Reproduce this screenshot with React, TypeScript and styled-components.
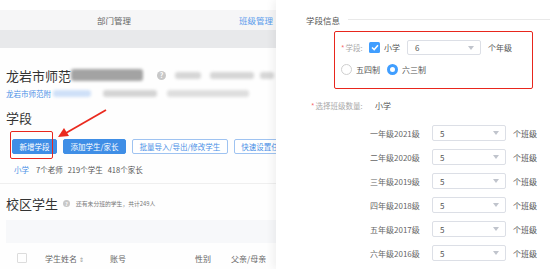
import styled, { createGlobalStyle } from 'styled-components';

const GlobalStyle = createGlobalStyle`
  html, body { margin: 0; padding: 0; background: #fff; }
  body { font-family: "Noto Sans CJK SC", "Noto Sans", sans-serif; color: #333; }
`;

const grades = [
  '一年级2021级',
  '二年级2020级',
  '三年级2019级',
  '四年级2018级',
  '五年级2017级',
  '六年级2016级',
];

const Blur = ({ w, h = 10, color = '#bdbdbd', ml = 0 }: { w: number; h?: number; color?: string; ml?: number }) => (
  <S.Blur style={{ width: w, height: h, background: color, marginLeft: ml }} />
);

const Caret = () => (
  <svg width="6" height="4" viewBox="0 0 6 4">
    <path d="M0 0 L6 0 L3 4 Z" fill="#c0c4cc" />
  </svg>
);

const Select = ({ value, wide }: { value: string; wide?: boolean }) => (
  <S.Select $wide={wide}>
    <span>{value}</span>
    <Caret />
  </S.Select>
);

export default function App() {
  return (
    <>
      <GlobalStyle />
      <S.Screen>
        <S.Left>
          <S.TopStrip />
          <S.Tabs>
            <S.Tab>部门管理</S.Tab>
            <S.Tab $active>班级管理</S.Tab>
          </S.Tabs>
          <S.GrayBand />
          <S.Content>
            <S.TitleRow>
              <S.Title>龙岩市师范</S.Title>
              <Blur w={72} h={12} color="#a3a3a3" />
              <S.Help $size={9} style={{ marginLeft: 14 }}>?</S.Help>
              <Blur w={26} h={7} color="#d6d6d6" ml={9} />
              <Blur w={44} h={7} color="#d6d6d6" ml={9} />
              <Blur w={14} h={7} color="#d6d6d6" ml={6} />
            </S.TitleRow>
            <S.LinkRow>
              <S.Link>龙岩市师范附</S.Link>
              <Blur w={38} h={7} color="#cfe0f8" ml={2} />
              <Blur w={54} h={7} color="#d4d4d4" ml={12} />
              <Blur w={82} h={7} color="#dedede" ml={10} />
            </S.LinkRow>
            <S.Section>学段</S.Section>
            <S.Buttons>
              <S.Button $primary>新增学段</S.Button>
              <S.Button $primary>添加学生/家长</S.Button>
              <S.Button>批量导入/导出/修改学生</S.Button>
              <S.Button>快速设置任课老师</S.Button>
            </S.Buttons>
            <S.Stats>
              <S.StatLink>小学</S.StatLink>
              <span>7个老师</span>
              <span>219个学生</span>
              <span>418个家长</span>
            </S.Stats>
          </S.Content>
          <S.Divider />
          <S.Content>
            <S.StudentsRow>
              <S.Title>校区学生</S.Title>
              <S.Help $size={7}>?</S.Help>
              <S.Hint>还有未分班的学生，共计249人</S.Hint>
            </S.StudentsRow>
            <S.FilterBar />
            <S.TableHead>
              <S.Check />
              <S.Col $w={65}>学生姓名 <S.Sort>⇕</S.Sort></S.Col>
              <S.Col $w={85}>账号</S.Col>
              <S.Col $w={36}>性别</S.Col>
              <S.Col $w={50}>父亲/母亲</S.Col>
            </S.TableHead>
          </S.Content>
        </S.Left>

        <S.Drawer>
          <S.Legend>
            <span>学段信息</span>
            <S.LegendLine />
          </S.Legend>
          <S.StageBox>
            <S.FormRow>
              <S.Label><S.Star>*</S.Star>学段:</S.Label>
              <S.Checkbox>
                <svg width="8" height="7" viewBox="0 0 8 7">
                  <path d="M1 3.5 L3.2 5.6 L7 1.2" fill="none" stroke="#fff" strokeWidth="1.5" />
                </svg>
              </S.Checkbox>
              <S.Text>小学</S.Text>
              <Select value="6" />
              <S.Text>个年级</S.Text>
            </S.FormRow>
            <S.FormRow>
              <S.Radio />
              <S.Text>五四制</S.Text>
              <S.Radio $checked />
              <S.Text>六三制</S.Text>
            </S.FormRow>
          </S.StageBox>
          <S.CountRow>
            <S.CountLabel><S.Star>*</S.Star>选择班级数量:</S.CountLabel>
            <S.Text>小学</S.Text>
          </S.CountRow>
          <S.Grades>
            {grades.map((g) => (
              <S.GradeRow key={g}>
                <S.GradeName>{g}</S.GradeName>
                <Select value="5" wide />
                <S.Text>个班级</S.Text>
              </S.GradeRow>
            ))}
          </S.Grades>
        </S.Drawer>

        <S.RedBox />
        <S.Arrow width="60" height="40" viewBox="0 0 60 40">
          <line x1="54" y1="4" x2="14" y2="27" stroke="#ea2a1f" strokeWidth="1.8" />
          <path d="M6 31 L12 22 L17 30 Z" fill="#ea2a1f" />
        </S.Arrow>
      </S.Screen>
    </>
  );
}

const S = {
  Screen: styled.div`
    position: relative;
    display: flex;
    width: 554px;
    height: 269px;
    overflow: hidden;
    background: #fff;
  `,
  Left: styled.div`
    width: 276px;
    flex-shrink: 0;
    overflow: hidden;
    background: #fefefe;
  `,
  TopStrip: styled.div`
    height: 10px;
    background: #fff;
  `,
  Tabs: styled.div`
    display: flex;
    height: 20px;
    align-items: center;
    background: #f6f6f7;
    padding-left: 97px;
    gap: 108px;
  `,
  Tab: styled.span<{ $active?: boolean }>`
    font-size: 8.5px;
    color: ${(p) => (p.$active ? '#5a9cec' : '#666')};
    white-space: nowrap;
  `,
  GrayBand: styled.div`
    height: 18px;
    background: #e8e9eb;
  `,
  Content: styled.div`
    padding-left: 6px;
  `,
  TitleRow: styled.div`
    display: flex;
    align-items: center;
    height: 20px;
    margin-top: 17px;
    white-space: nowrap;
  `,
  Title: styled.span`
    font-size: 13px;
    color: #333;
    line-height: 1;
  `,
  Blur: styled.span`
    display: inline-block;
    flex-shrink: 0;
    border-radius: 3px;
    filter: blur(1.6px);
  `,
  Help: styled.span<{ $size: number }>`
    display: inline-flex;
    align-items: center;
    justify-content: center;
    flex-shrink: 0;
    width: ${(p) => p.$size}px;
    height: ${(p) => p.$size}px;
    border-radius: 50%;
    background: #c8c8c8;
    color: #fff;
    font-size: ${(p) => p.$size - 2}px;
    font-weight: bold;
    line-height: 1;
  `,
  LinkRow: styled.div`
    display: flex;
    align-items: center;
    height: 12px;
    margin-top: 2px;
    white-space: nowrap;
  `,
  Link: styled.span`
    font-size: 7.5px;
    color: #4a8fe6;
  `,
  Section: styled.div`
    font-size: 13px;
    line-height: 16px;
    margin-top: 11px;
    color: #333;
  `,
  Buttons: styled.div`
    display: flex;
    gap: 6px;
    margin-top: 13px;
    padding-left: 6px;
    white-space: nowrap;
  `,
  Button: styled.div<{ $primary?: boolean }>`
    flex-shrink: 0;
    height: 15px;
    line-height: 14px;
    padding: 0 6.5px;
    box-sizing: border-box;
    font-size: 7.5px;
    border-radius: 2px;
    border: 1px solid ${(p) => (p.$primary ? '#3f8ee6' : '#9fc3f1')};
    background: ${(p) => (p.$primary ? '#3f8ee6' : '#fff')};
    color: ${(p) => (p.$primary ? '#fff' : '#4a8fe6')};
  `,
  Stats: styled.div`
    display: flex;
    gap: 5px;
    margin-top: 11px;
    padding-left: 8px;
    font-size: 7.5px;
    line-height: 10px;
    color: #555;
    white-space: nowrap;
  `,
  StatLink: styled.span`
    color: #4a8fe6;
    margin-right: 2px;
  `,
  Divider: styled.div`
    height: 1px;
    background: #efefef;
    margin-top: 8px;
  `,
  StudentsRow: styled.div`
    display: flex;
    align-items: center;
    gap: 5px;
    height: 16px;
    margin-top: 11px;
    white-space: nowrap;
  `,
  Hint: styled.span`
    font-size: 5.8px;
    color: #777;
    margin-left: 1px;
  `,
  FilterBar: styled.div`
    height: 23px;
    margin-top: 9px;
    background: #f7f8fa;
  `,
  TableHead: styled.div`
    display: flex;
    align-items: center;
    height: 12px;
    margin-top: 9px;
    padding-left: 11px;
    font-size: 8px;
    color: #666;
    white-space: nowrap;
  `,
  Check: styled.span`
    width: 10px;
    height: 10px;
    border: 1px solid #dcdcdc;
    box-sizing: border-box;
    border-radius: 1px;
    margin-right: 18px;
    flex-shrink: 0;
  `,
  Col: styled.span<{ $w: number }>`
    width: ${(p) => p.$w}px;
    flex-shrink: 0;
  `,
  Sort: styled.span`
    font-size: 6px;
    color: #999;
  `,
  Drawer: styled.div`
    flex: 1;
    background: #fff;
    box-shadow: -3px 0 8px rgba(0, 0, 0, 0.06);
    padding: 13px 4px 0 30px;
    font-size: 8px;
    color: #555;
    z-index: 1;
  `,
  Legend: styled.div`
    display: flex;
    align-items: center;
    gap: 8px;
    font-size: 8.5px;
    color: #555;
    height: 13px;
  `,
  LegendLine: styled.div`
    flex: 1;
    height: 1px;
    background: #e9e9e9;
  `,
  StageBox: styled.div`
    width: 199px;
    height: 58px;
    box-sizing: border-box;
    margin: 4px 0 0 27px;
    padding: 10px 0 0 8px;
    display: flex;
    flex-direction: column;
    gap: 7px;
  `,
  FormRow: styled.div`
    display: flex;
    align-items: center;
    height: 15px;
    white-space: nowrap;
  `,
  Label: styled.span`
    width: 28px;
    color: #aaa;
    font-size: 7.5px;
    flex-shrink: 0;
  `,
  Star: styled.span`
    color: #f56c6c;
    margin-right: 1px;
  `,
  Checkbox: styled.span`
    display: inline-flex;
    align-items: center;
    justify-content: center;
    width: 11px;
    height: 11px;
    background: #409eff;
    border-radius: 1.5px;
    margin-right: 4px;
    flex-shrink: 0;
  `,
  Text: styled.span`
    font-size: 8px;
    color: #555;
    margin-right: 7px;
  `,
  Select: styled.div<{ $wide?: boolean }>`
    display: flex;
    align-items: center;
    justify-content: space-between;
    width: 74px;
    height: ${(p) => (p.$wide ? 16 : 15)}px;
    box-sizing: border-box;
    border: 1px solid #dcdfe6;
    border-radius: 2px;
    padding: 0 6px 0 7px;
    margin-right: 7px;
    font-size: 8px;
    color: #555;
    flex-shrink: 0;
  `,
  Radio: styled.span<{ $checked?: boolean }>`
    width: 11px;
    height: 11px;
    box-sizing: border-box;
    border-radius: 50%;
    border: ${(p) => (p.$checked ? '3.5px solid #409eff' : '1px solid #cfcfcf')};
    background: #fff;
    margin-right: 4px;
    flex-shrink: 0;
  `,
  CountRow: styled.div`
    display: flex;
    align-items: center;
    height: 12px;
    margin-top: 11px;
    white-space: nowrap;
  `,
  CountLabel: styled.span`
    width: 64px;
    color: #aaa;
    font-size: 7.5px;
    margin-left: 5px;
    flex-shrink: 0;
  `,
  Grades: styled.div`
    display: flex;
    flex-direction: column;
    gap: 8px;
    margin: 14px 0 0 64px;
  `,
  GradeRow: styled.div`
    display: flex;
    align-items: center;
    height: 16px;
    white-space: nowrap;
  `,
  GradeName: styled.span`
    width: 62px;
    font-size: 8px;
    color: #666;
    flex-shrink: 0;
  `,
  RedBox: styled.div`
    position: absolute;
    left: 10px;
    top: 131px;
    width: 43px;
    height: 28px;
    border: 1.5px solid #e8261d;
    border-radius: 2px;
    box-sizing: border-box;
    z-index: 3;
    &::after {
      content: '';
      position: absolute;
      left: 323px;
      top: -101px;
      width: 199px;
      height: 58px;
      border: 1.5px solid #e8261d;
      border-radius: 2px;
      box-sizing: border-box;
    }
  `,
  Arrow: styled.svg`
    position: absolute;
    left: 52px;
    top: 106px;
    z-index: 3;
  `,
};
